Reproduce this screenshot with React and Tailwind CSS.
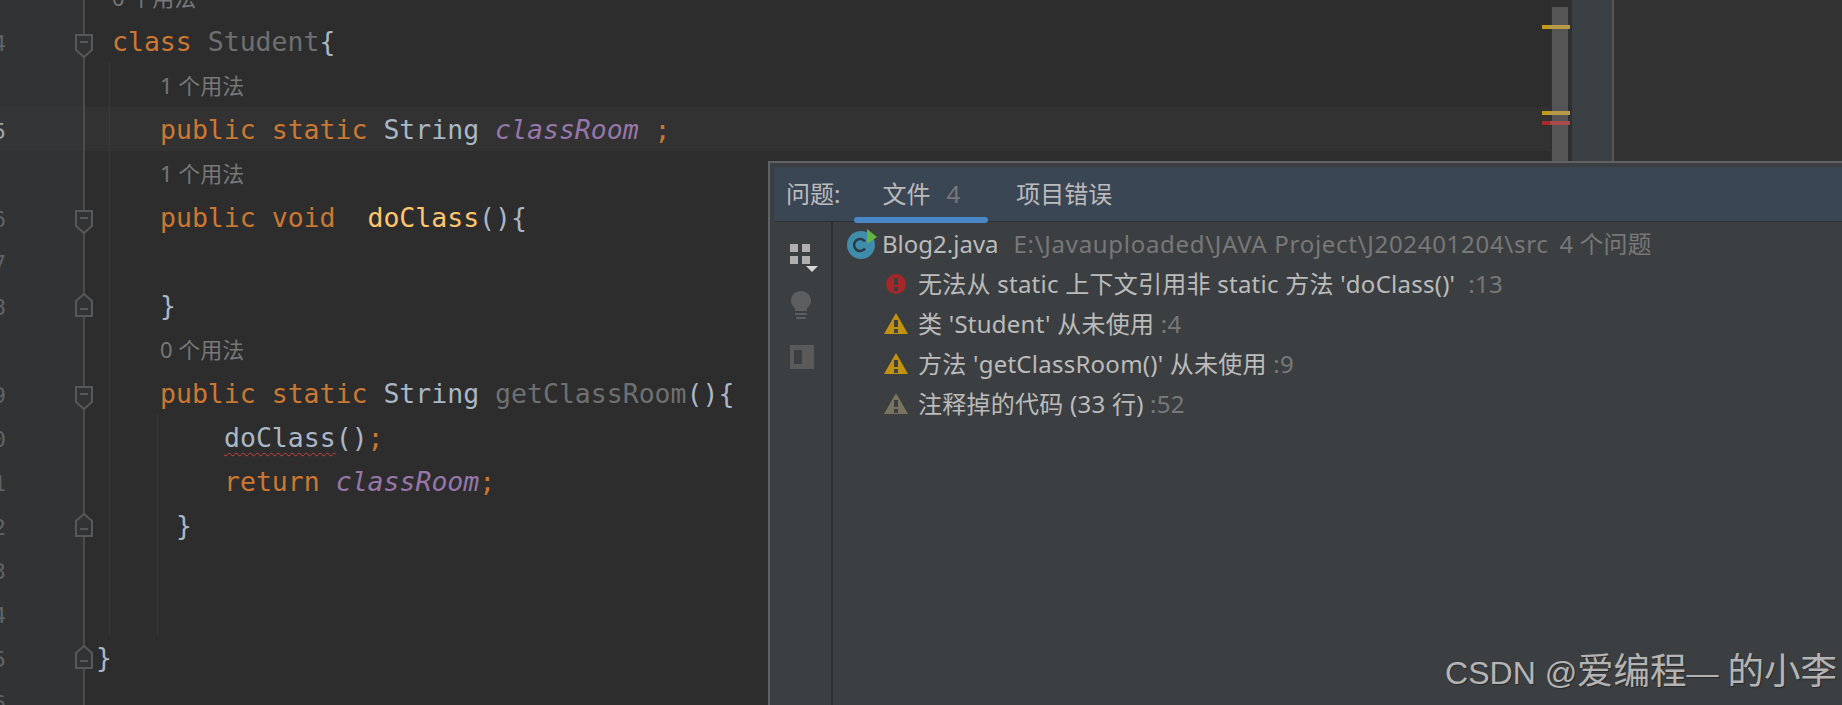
const mono = "font-['DejaVu_Sans_Mono','Liberation_Mono',monospace]";
const ui = "font-['Noto_Sans','Noto_Sans_CJK_SC',sans-serif]";
const cjk = "font-['Noto_Sans','Noto_Sans_CJK_SC',sans-serif]";

const kw = "text-[#cc7832]";
const plain = "text-[#a9b7c6]";
const unused = "text-[#6e7072]";
const field = "text-[#9876aa] italic";

const rows = [
  { h: "h-[19px]", hint: "0 个用法", indent: 0, clip: true },
  { num: "4", fold: "start", indent: 0, code: [[kw, "class "], [unused, "Student"], [plain, "{"]] },
  { hint: "1 个用法", indent: 1 },
  { num: "5", active: true, indent: 1, code: [[kw, "public static "], [plain, "String "], [field, "classRoom"], [kw, " ;"]] },
  { hint: "1 个用法", indent: 1 },
  { num: "6", fold: "start", indent: 1, code: [[kw, "public void  "], ["text-[#ffc66d]", "doClass"], [plain, "(){"]] },
  { num: "7", indent: 1, code: [] },
  { num: "8", fold: "end", indent: 1, code: [[plain, "}"]] },
  { hint: "0 个用法", indent: 1 },
  { num: "9", fold: "start", indent: 1, code: [[kw, "public static "], [plain, "String "], [unused, "getClassRoom"], [plain, "(){"]] },
  { num: "0", indent: 2, code: [[plain + " underline decoration-wavy decoration-[#cc3f3f] decoration-1 underline-offset-[5px]", "doClass"], [plain, "()"], [kw, ";"]] },
  { num: "1", indent: 2, code: [[kw, "return "], [field, "classRoom"], [kw, ";"]] },
  { num: "2", fold: "end", indent: 1, extra: " ", code: [[plain, "}"]] },
  { num: "3", code: [] },
  { num: "4", code: [] },
  { num: "5", fold: "end", indent: -1, code: [[plain, "}"]] },
  { num: "6", code: [] },
];

const indents = { "-1": "pl-[12px]", 0: "pl-[28px]", 1: "pl-[76px]", 2: "pl-[140px]" };

function FoldMark({ type }) {
  if (type === "start") {
    return (
      <svg className="absolute left-[75px] top-[15px]" width="18" height="24" viewBox="0 0 18 24" fill="#313335" stroke="#56585a" strokeWidth="2">
        <path d="M1 1H17V16L9 23L1 16Z" />
        <path d="M5 8H13" />
      </svg>
    );
  }
  return (
    <svg className="absolute left-[75px] top-[10px]" width="18" height="24" viewBox="0 0 18 24" fill="#313335" stroke="#56585a" strokeWidth="2">
      <path d="M1 23H17V8L9 1L1 8Z" />
      <path d="M5 16H13" />
    </svg>
  );
}

function CodeRow({ row }) {
  return (
    <div className={`flex shrink-0 ${row.h || "h-[44px]"} ${row.active ? "bg-[#323232]" : ""} ${row.clip ? "items-end overflow-hidden" : "items-center"}`}>
      <div className={`relative h-[44px] w-[84px] shrink-0 ${row.active ? "bg-[#333537]" : "bg-[#313335]"}`}>
        <div className="absolute left-[83px] top-0 h-full w-[2px] bg-[#4b4c4d]" />
        {row.num && (
          <div className={`absolute right-[78px] top-[8px] flex justify-end text-[22px] ${mono} ${row.active ? "text-[#a4a3a3]" : "text-[#606366]"}`}>
            {row.num}
          </div>
        )}
        {row.fold && <FoldMark type={row.fold} />}
      </div>
      {row.hint ? (
        <div className={`${indents[row.indent]} whitespace-pre text-[22px] leading-[44px] text-[#787878] ${cjk}`}>{row.hint}</div>
      ) : (
        <div className={`${indents[row.indent ?? 0]} whitespace-pre pt-[2px] text-[26.5px] ${mono}`}>
          {row.extra}
          {row.code.map(([cls, text], i) => (
            <span key={i} className={cls}>{text}</span>
          ))}
        </div>
      )}
    </div>
  );
}

function WarnIcon({ color }) {
  return (
    <svg width="24" height="22" viewBox="0 0 24 22" className="shrink-0">
      <path d="M12 0L24 21H0Z" fill={color} />
      <rect x="10" y="7" width="4" height="7" fill="#3c3f41" />
      <rect x="10" y="16" width="4" height="4" fill="#3c3f41" />
    </svg>
  );
}

function ErrorIcon() {
  return (
    <svg width="20" height="20" viewBox="0 0 20 20" className="shrink-0">
      <circle cx="10" cy="10" r="10" fill="#a6272a" />
      <rect x="8" y="4" width="4" height="7" fill="#3c3f41" />
      <rect x="8" y="13" width="4" height="4" fill="#3c3f41" />
    </svg>
  );
}

const problems = [
  { icon: <ErrorIcon />, text: "无法从 static 上下文引用非 static 方法 'doClass()'", line: "  :13", pad: "pl-[2px] pr-[12px]" },
  { icon: <WarnIcon color="#c1920f" />, text: "类 'Student' 从未使用", line: " :4", pad: "pr-[10px]" },
  { icon: <WarnIcon color="#c1920f" />, text: "方法 'getClassRoom()' 从未使用", line: " :9", pad: "pr-[10px]" },
  { icon: <WarnIcon color="#7a745f" />, text: "注释掉的代码 (33 行)", line: " :52", pad: "pr-[10px]" },
];

function ProblemsPanel() {
  return (
    <div className={`absolute left-[768px] top-[161px] bottom-0 right-0 flex flex-col border-l-[2px] border-t-[2px] border-[#606263] bg-[#3c3f41] pl-[4px] pt-[4px] ${ui}`}>
      <div className="relative flex h-[54px] shrink-0 items-center bg-[#3b4655] pl-[12px] text-[24px] text-[#bbbbbb]">
        <span>问题:</span>
        <span className="ml-[42px]">文件</span>
        <span className="ml-[16px] text-[#787878]">4</span>
        <span className="ml-[56px]">项目错误</span>
        <div className="absolute left-[80px] top-[50px] h-[6px] w-[134px] rounded-full bg-[#4a88c7]" />
      </div>
      <div className="flex min-h-0 flex-1 border-t border-[#2f3133]">
        <div className="flex w-[59px] shrink-0 flex-col items-center border-r-[2px] border-[#2f3133] pr-[6px] pt-[22px]">
          <svg className="ml-[9px]" width="28" height="29" viewBox="0 0 28 29">
            <rect x="0" y="0" width="8" height="8" fill="#b0b0b0" />
            <rect x="12" y="0" width="8" height="8" fill="#b0b0b0" />
            <rect x="0" y="12" width="8" height="8" fill="#b0b0b0" />
            <rect x="12" y="12" width="8" height="8" fill="#b0b0b0" />
            <path d="M16 22H28L22 28Z" fill="#d6d6d6" />
          </svg>
          <svg className="ml-[2px] mt-[18px]" width="20" height="28" viewBox="0 0 20 28">
            <path d="M10 0C15.500 0 20 4 20 9.500C20 13 18 15.500 16 17.500V20H4V17.500C2 15.500 0 13 0 9.500C0 4 4.500 0 10 0Z" fill="#5d5e5f" />
            <rect x="4" y="22" width="12" height="2" fill="#5d5e5f" />
            <rect x="5" y="26" width="10" height="2" fill="#5d5e5f" />
          </svg>
          <svg className="ml-[4px] mt-[26px]" width="24" height="24" viewBox="0 0 24 24">
            <path fillRule="evenodd" d="M0 0H24V24H0ZM4 5V19H12V5Z" fill="#5a5a5a" />
          </svg>
        </div>
        <div className="flex-1 pl-[14px] pt-[2px]">
          <div className="flex h-[40px] items-center whitespace-pre text-[24px]">
            <svg width="30" height="30" viewBox="0 0 30 30" className="mr-[5px] shrink-0">
              <circle cx="14" cy="16" r="14" fill="#3f8cab" />
              <path d="M18 12.500A6 6 0 1 0 18 19.500" fill="none" stroke="#2b3a44" strokeWidth="2.500" />
              <path d="M20 0L30 8L20 15Z" fill="#62b543" />
            </svg>
            <span className="text-[#bbbbbb]">Blog2.java</span>
            <span className="ml-[15px] tracking-[0.7px] text-[#787878]">E:\Javauploaded\JAVA Project\J202401204\src</span>
            <span className="ml-[11px] text-[#787878]">4 个问题</span>
          </div>
          {problems.map((p) => (
            <div key={p.line} className="flex h-[40px] items-center whitespace-pre pl-[37px] text-[24px] tracking-[0.25px] text-[#bbbbbb]">
              <span className={`flex items-center ${p.pad}`}>{p.icon}</span>
              <span>{p.text}</span>
              <span className="text-[#787878]">{p.line}</span>
            </div>
          ))}
        </div>
      </div>
      <div className="absolute right-[5px] top-[487px] whitespace-pre font-['Liberation_Sans','Noto_Sans_CJK_SC',sans-serif] text-[32px] leading-[44px] text-[#b4b4b4] [text-shadow:1px_1px_1px_#2a2a2a]">
        CSDN @<span className="text-[36.5px]">爱编程</span>— <span className="text-[36.5px]">的小李</span>
      </div>
    </div>
  );
}

function OverviewMark({ top, solid, pale }) {
  return (
    <div className="absolute left-[1542px] flex h-[4px] w-[28px]" style={{ top }}>
      <div className={`w-[8px] ${solid}`} />
      <div className={`flex-1 ${pale}`} />
    </div>
  );
}

export default function App() {
  return (
    <div className="relative flex h-[705px] w-[1842px] overflow-hidden bg-[#333333]">
      <div className="relative flex w-[1550px] shrink-0 flex-col overflow-hidden bg-[#2d2d2d]">
        {rows.map((row, i) => (
          <CodeRow key={i} row={row} />
        ))}
        <div className="absolute left-[109px] top-[63px] h-[572px] w-[1px] bg-[#3a3a3a]" />
        <div className="absolute left-[157px] top-[415px] h-[220px] w-[1px] bg-[#3a3a3a]" />
      </div>
      <div className="h-full w-[22px] shrink-0 bg-[#303030] pl-[2px] pt-[7px]">
        <div className="h-[154px] w-[16px] bg-[#555555]" />
      </div>
      <div className="h-full w-[40px] shrink-0 bg-[#3b4045]" />
      <div className="h-full w-[2px] shrink-0 bg-[#555657]" />
      <OverviewMark top={25} solid="bg-[#c39a1a]" pale="bg-[#b79b48]" />
      <OverviewMark top={111} solid="bg-[#c39a1a]" pale="bg-[#b79b48]" />
      <OverviewMark top={121} solid="bg-[#a52a2a]" pale="bg-[#a84b4b]" />
      <ProblemsPanel />
    </div>
  );
}
